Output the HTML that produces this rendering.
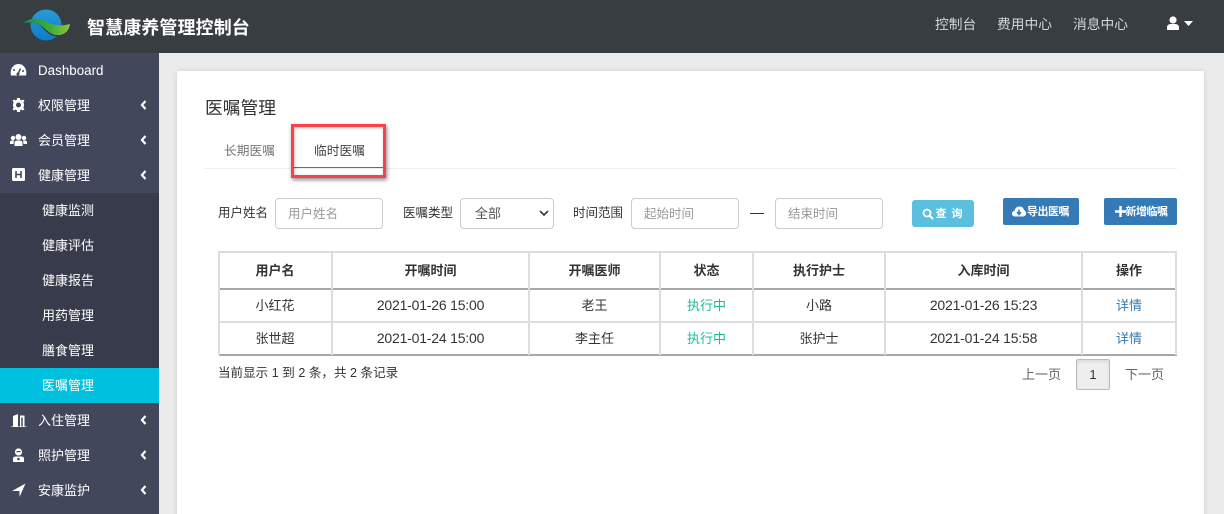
<!DOCTYPE html>
<html lang="zh">
<head>
<meta charset="utf-8">
<title>医嘱管理</title>
<style>
*{box-sizing:border-box}
html,body{margin:0;padding:0;width:1224px;height:514px;overflow:hidden;background:#ebebeb;font-family:"Liberation Sans","Noto Sans CJK SC",sans-serif;font-size:13px;color:#333}
#wrap{position:relative;width:1224px;height:514px;overflow:hidden;background:#ebebeb}
.a{position:absolute;white-space:nowrap}
#hd{position:absolute;left:0;top:0;width:1224px;height:53px;background:#383d41}
#sb{position:absolute;left:0;top:53px;width:159px;height:461px;background:#43475c}
#sub{position:absolute;left:0;top:193px;width:159px;height:210px;background:#373b4b}
#act{position:absolute;left:0;top:368px;width:159px;height:35px;background:#00c0e0}
.m{position:absolute;left:38px;color:#fff;font-size:13px;line-height:20px;white-space:nowrap}
.s{position:absolute;left:42px;color:#fff;font-size:13px;line-height:20px;white-space:nowrap}
.ic{position:absolute;left:10px;width:17px;height:14px}
.ch{position:absolute;left:140px;width:7px;height:10px}
#card{position:absolute;left:177px;top:71px;width:1027px;height:460px;background:#fff;box-shadow:0 0 5px rgba(0,0,0,.12)}
.inp{position:absolute;top:198px;height:31px;border:1px solid #ccc;border-radius:4px;background:#fff;color:#999;font-size:12.5px;line-height:30px;padding-left:12px;white-space:nowrap}
.lb{position:absolute;top:204px;font-size:12.5px;line-height:18px;color:#333;white-space:nowrap}
.btn{position:absolute;color:#fff;border-radius:2px;font-weight:bold;font-size:11px;text-align:center;white-space:nowrap}
.v{position:absolute;top:251px;width:2px;height:104px;background:#ddd}
.h{position:absolute;left:219px;width:958px;height:2px;background:#ddd}
.c{position:absolute;text-align:center;font-size:13px;line-height:20px;white-space:nowrap;color:#333}
.th{font-weight:bold;top:261px}
.d{font-size:14px;letter-spacing:-.2px}
</style>
</head>
<body>
<div id="wrap">
<div id="hd"></div>
<svg class="a" style="left:22px;top:9px" width="50" height="34" viewBox="0 0 50 34">
  <defs>
    <linearGradient id="bl" x1="0" y1="0" x2="0" y2="1"><stop offset="0" stop-color="#2a9bd6"/><stop offset="1" stop-color="#0f7cc4"/></linearGradient>
    <linearGradient id="gr" x1="0" y1="0" x2="1" y2="0"><stop offset="0" stop-color="#1c8a58"/><stop offset=".6" stop-color="#3fae3c"/><stop offset="1" stop-color="#8cc63f"/></linearGradient>
  </defs>
  <circle cx="24" cy="16" r="15.5" fill="url(#bl)"/>
  <path d="M1 14C9 9 17 9 24 13C31 17 40 18 48 15C47 24 40 29 32 27C24 25 22 19 16 15C11 13 6 13 1 14Z" fill="#383d41"/>
  <path d="M1 14C9 8 18 9 25 13C32 17 41 17 48 15C47 23 41 27 34 26C26 25 23 18 16 15C11 13 6 13 1 14Z" fill="url(#gr)"/>
</svg>
<div class="a" style="left:87px;top:15px;font-size:18px;letter-spacing:.1px;line-height:26px;font-weight:bold;color:#fff">智慧康养管理控制台</div>
<div class="a" style="left:935px;top:15px;font-size:13.75px;line-height:20px;color:#d4d7d8">控制台</div>
<div class="a" style="left:997px;top:15px;font-size:13.75px;line-height:20px;color:#d4d7d8">费用中心</div>
<div class="a" style="left:1073px;top:15px;font-size:13.75px;line-height:20px;color:#d4d7d8">消息中心</div>
<svg class="a" style="left:1166px;top:16px" width="28" height="15" viewBox="0 0 28 15">
  <circle cx="7" cy="4" r="3.6" fill="#fff"/>
  <path d="M1 14V11.5C1 9 3 8 4.5 8H9.5C11 8 13 9 13 11.500V14Z" fill="#fff"/>
  <path d="M18 5H27L22.500 10Z" fill="#fff"/>
</svg>

<div id="sb"></div>
<div id="sub"></div>
<div id="act"></div>

<svg class="ic" style="top:63px" viewBox="0 0 17 14"><path d="M1 12.500C-.5 6 3.500 1 8.500 1S17.500 6 16 12.500Z" fill="#fff"/><path d="M8 11L10.500 5.500" stroke="#43475c" stroke-width="1.500"/><circle cx="8" cy="11" r="1.500" fill="#43475c"/><circle cx="4" cy="7" r="1" fill="#43475c"/><circle cx="13" cy="8" r="1" fill="#43475c"/></svg>
<div class="m" style="top:61px;font-size:13.400px">Dashboard</div>

<svg class="ic" style="top:98px" viewBox="0 0 17 14"><circle cx="8.500" cy="7" r="4" fill="none" stroke="#fff" stroke-width="3"/><path d="M7 0H10V3H7ZM7 11H10V14H7ZM2.500 2.500L4.500 1.500L6 3.500L4 5ZM12.500 1.500L14.500 2.500L13 5L11 3.500ZM2.500 11.500L4 9L6 10.500L4.500 12.500ZM13 9L14.500 11.500L12.500 12.500L11 10.500Z" fill="#fff"/></svg>
<div class="m" style="top:96px">权限管理</div>
<svg class="ch" style="top:100px" viewBox="0 0 7 10"><path d="M5.500 1L2 5L5.500 9" fill="none" stroke="#fff" stroke-width="2.200"/></svg>

<svg class="ic" style="top:133px" viewBox="0 0 17 14"><circle cx="8.500" cy="4" r="3" fill="#fff"/><circle cx="3" cy="5" r="2.200" fill="#fff"/><circle cx="14" cy="5" r="2.200" fill="#fff"/><path d="M4.500 13V10C4.500 8 6 7.500 7 7.500H10C11 7.500 12.500 8 12.500 10V13Z" fill="#fff"/><path d="M0 11V9C0 8 1 7.500 2 7.500H4L3.500 11ZM17 11V9C17 8 16 7.500 15 7.500H13L13.500 11Z" fill="#fff"/></svg>
<div class="m" style="top:131px">会员管理</div>
<svg class="ch" style="top:135px" viewBox="0 0 7 10"><path d="M5.500 1L2 5L5.500 9" fill="none" stroke="#fff" stroke-width="2.200"/></svg>

<svg class="ic" style="top:168px;left:12px;width:13px;height:13px" viewBox="0 0 13 13"><rect width="13" height="13" rx="1.500" fill="#fff"/><path d="M4 3V10M9 3V10M4 6.500H9" stroke="#43475c" stroke-width="1.600" fill="none"/></svg>
<div class="m" style="top:166px">健康管理</div>
<svg class="ch" style="top:170px" viewBox="0 0 7 10"><path d="M5.500 1L2 5L5.500 9" fill="none" stroke="#fff" stroke-width="2.200"/></svg>

<div class="s" style="top:201px">健康监测</div>
<div class="s" style="top:236px">健康评估</div>
<div class="s" style="top:271px">健康报告</div>
<div class="s" style="top:306px">用药管理</div>
<div class="s" style="top:341px">膳食管理</div>
<div class="s" style="top:376px">医嘱管理</div>

<svg class="ic" style="top:413px" viewBox="0 0 17 14"><path d="M1 13.500H3V3L8 1V13.500H10V2.500H14.500V13.500H16.500V14H1Z" fill="#fff"/><path d="M12 4.500V13.500" stroke="#43475c" stroke-width="1.500"/></svg>
<div class="m" style="top:411px">入住管理</div>
<svg class="ch" style="top:415px" viewBox="0 0 7 10"><path d="M5.500 1L2 5L5.500 9" fill="none" stroke="#fff" stroke-width="2.200"/></svg>

<svg class="ic" style="top:448px" viewBox="0 0 17 14"><circle cx="8.500" cy="4" r="3.600" fill="#fff"/><path d="M3 14V10.500C3 9 4.500 8.500 6 8.500H11C12.500 8.500 14 9 14 10.500V14Z" fill="#fff"/><circle cx="8.500" cy="11" r="1.300" fill="#43475c"/><rect x="6.500" y="3" width="4" height="1.200" fill="#43475c"/></svg>
<div class="m" style="top:446px">照护管理</div>
<svg class="ch" style="top:450px" viewBox="0 0 7 10"><path d="M5.500 1L2 5L5.500 9" fill="none" stroke="#fff" stroke-width="2.200"/></svg>

<svg class="ic" style="top:483px" viewBox="0 0 17 14"><path d="M15.500 .5L9.500 14V8H2Z" fill="#fff"/></svg>
<div class="m" style="top:481px">安康监护</div>
<svg class="ch" style="top:485px" viewBox="0 0 7 10"><path d="M5.500 1L2 5L5.500 9" fill="none" stroke="#fff" stroke-width="2.200"/></svg>

<div id="card"></div>
<div class="a" style="left:205px;top:96px;font-size:17.750px;line-height:25px;color:#333">医嘱管理</div>
<div class="a" style="left:204px;top:168px;width:973px;height:1px;background:#eee"></div>
<div class="a" style="left:224px;top:142px;font-size:12.750px;line-height:18px;color:#777">长期医嘱</div>
<div class="a" style="left:314px;top:142px;font-size:12.750px;line-height:18px;color:#444">临时医嘱</div>
<div class="a" style="left:294px;top:167px;width:90px;height:1px;background:#337ab7"></div>
<div class="a" style="left:291px;top:124px;width:95px;height:54px;border:3px solid #f4444a;box-shadow:1px 2px 4px rgba(0,0,0,.45),inset 1px 1px 3px rgba(0,0,0,.25)"></div>

<div class="lb" style="left:218px">用户姓名</div>
<div class="inp" style="left:275px;width:108px">用户姓名</div>
<div class="lb" style="left:403px">医嘱类型</div>
<div class="inp" style="left:460px;width:94px;color:#555;padding-left:14px;font-size:13px">全部</div>
<svg class="a" style="left:539px;top:210px" width="10" height="7" viewBox="0 0 10 7"><path d="M1 1L5 5L9 1" fill="none" stroke="#444" stroke-width="1.800"/></svg>
<div class="lb" style="left:573px">时间范围</div>
<div class="inp" style="left:631px;width:108px">起始时间</div>
<div class="a" style="left:750px;top:213px;width:14px;height:1px;background:#333"></div>
<div class="inp" style="left:775px;width:108px">结束时间</div>

<div class="btn" style="left:912px;top:200px;width:62px;height:27px;line-height:29px;background:#5bc0de;border-radius:3px;padding-left:13px;letter-spacing:1px">查 询</div>
<svg class="a" style="left:922px;top:208px" width="12" height="12" viewBox="0 0 12 12"><circle cx="5" cy="5" r="3.500" fill="none" stroke="#fff" stroke-width="1.800"/><path d="M7.500 7.500L11 11" stroke="#fff" stroke-width="2.200"/></svg>

<div class="btn" style="left:1003px;top:198px;width:76px;height:27px;line-height:29px;background:#337ab7;padding-left:14px;letter-spacing:-.5px">导出医嘱</div>
<svg class="a" style="left:1012px;top:206px" width="14" height="11" viewBox="0 0 14 11"><path d="M3.500 10.500C1.500 10.500 0 9.500 0 7.500C0 6 1 5 2.500 4.800C3 2 5 .5 7.500 .5C10 .5 11.500 2 12 4C13.500 4.500 14 6 14 7.500C14 9.500 12.500 10.500 10.500 10.500Z" fill="#fff"/><path d="M7 3.500V7.500M5 6L7 8.500L9 6" fill="none" stroke="#337ab7" stroke-width="1.500"/></svg>

<div class="btn" style="left:1104px;top:198px;width:73px;height:27px;line-height:29px;background:#337ab7;padding-left:12px;letter-spacing:-.5px">新增临嘱</div>
<svg class="a" style="left:1115px;top:206px" width="11" height="11" viewBox="0 0 11 11"><path d="M5.500 0V11M0 5.500H11" stroke="#fff" stroke-width="2.400"/></svg>

<div class="h" style="top:251px"></div>
<div class="h" style="top:288px;height:2px;background:#a8a8a8"></div>
<div class="h" style="top:321px"></div>
<div class="h" style="top:354px;height:2px;background:#a8a8a8"></div>
<div class="v" style="left:218px"></div>
<div class="v" style="left:331px"></div>
<div class="v" style="left:528px"></div>
<div class="v" style="left:659px"></div>
<div class="v" style="left:752px"></div>
<div class="v" style="left:884px"></div>
<div class="v" style="left:1081px"></div>
<div class="v" style="left:1175px"></div>

<div class="c th" style="left:219px;width:112px">用户名</div>
<div class="c th" style="left:333px;width:195px">开嘱时间</div>
<div class="c th" style="left:530px;width:129px">开嘱医师</div>
<div class="c th" style="left:661px;width:91px">状态</div>
<div class="c th" style="left:754px;width:130px">执行护士</div>
<div class="c th" style="left:886px;width:195px">入库时间</div>
<div class="c th" style="left:1083px;width:92px">操作</div>

<div class="c" style="left:219px;width:112px;top:296px">小红花</div>
<div class="c d" style="left:333px;width:195px;top:295px">2021-01-26 15:00</div>
<div class="c" style="left:530px;width:129px;top:296px">老王</div>
<div class="c" style="left:661px;width:91px;top:296px;color:#1abc9c">执行中</div>
<div class="c" style="left:754px;width:130px;top:296px">小路</div>
<div class="c d" style="left:886px;width:195px;top:295px">2021-01-26 15:23</div>
<div class="c" style="left:1083px;width:92px;top:296px;color:#337ab7">详情</div>

<div class="c" style="left:219px;width:112px;top:329px">张世超</div>
<div class="c d" style="left:333px;width:195px;top:328px">2021-01-24 15:00</div>
<div class="c" style="left:530px;width:129px;top:329px">李主任</div>
<div class="c" style="left:661px;width:91px;top:329px;color:#1abc9c">执行中</div>
<div class="c" style="left:754px;width:130px;top:329px">张护士</div>
<div class="c d" style="left:886px;width:195px;top:328px">2021-01-24 15:58</div>
<div class="c" style="left:1083px;width:92px;top:329px;color:#337ab7">详情</div>

<div class="a" style="left:218px;top:363px;font-size:12.500px;line-height:20px;letter-spacing:.05px;color:#333">当前显示 1 到 2 条，共 2 条记录</div>
<div class="a" style="left:1022px;top:365px;font-size:13px;line-height:20px;color:#666">上一页</div>
<div class="a" style="left:1076px;top:359px;width:34px;height:31px;border:1px solid #bbb;border-radius:2px;background:#eee;text-align:center;line-height:29px;font-size:13px;color:#333;box-shadow:inset 0 2px 3px rgba(0,0,0,.08)">1</div>
<div class="a" style="left:1125px;top:365px;font-size:13px;line-height:20px;color:#666">下一页</div>
</div>
</body>
</html>
